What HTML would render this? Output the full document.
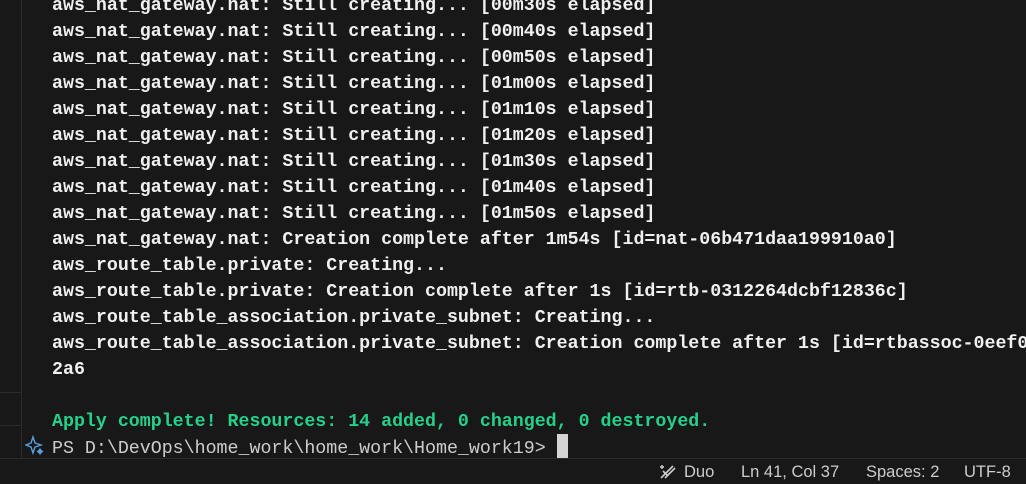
<!DOCTYPE html>
<html><head><style>
body{margin:0;width:1026px;height:483px;background:#181818;overflow:hidden;position:relative;font-family:"Liberation Mono",monospace;}
.gut{position:absolute;left:21px;top:0;width:1px;height:458px;background:#2b2b2b}
.hl{position:absolute;left:0;width:21px;height:1px;background:#2b2b2b}
.t{position:absolute;left:52px;top:-7px;font-size:18.3px;line-height:26px;color:#f0f0f0;font-weight:bold;white-space:pre}
.g{color:#23d18b}
.p{position:absolute;left:52px;top:434px;font-size:18.3px;line-height:26px;color:#cccccc;white-space:pre}
.cur{display:inline-block;width:11px;height:24px;background:#d4d4d4;vertical-align:-5px}
.sb{position:absolute;left:0;top:458px;width:1026px;height:25px;background:#181818;border-top:1px solid #2b2b2b;font-family:"Liberation Sans",sans-serif;font-size:16.5px;color:#cccccc}
.sb span{position:absolute;top:4px}
</style></head><body>
<div class="gut"></div>
<div class="hl" style="top:392px"></div>
<div class="hl" style="top:425px"></div>
<div class="t">aws_nat_gateway.nat: Still creating... [00m30s elapsed]
aws_nat_gateway.nat: Still creating... [00m40s elapsed]
aws_nat_gateway.nat: Still creating... [00m50s elapsed]
aws_nat_gateway.nat: Still creating... [01m00s elapsed]
aws_nat_gateway.nat: Still creating... [01m10s elapsed]
aws_nat_gateway.nat: Still creating... [01m20s elapsed]
aws_nat_gateway.nat: Still creating... [01m30s elapsed]
aws_nat_gateway.nat: Still creating... [01m40s elapsed]
aws_nat_gateway.nat: Still creating... [01m50s elapsed]
aws_nat_gateway.nat: Creation complete after 1m54s [id=nat-06b471daa199910a0]
aws_route_table.private: Creating...
aws_route_table.private: Creation complete after 1s [id=rtb-0312264dcbf12836c]
aws_route_table_association.private_subnet: Creating...
aws_route_table_association.private_subnet: Creation complete after 1s [id=rtbassoc-0eef0
2a6

<span class="g">Apply complete! Resources: 14 added, 0 changed, 0 destroyed.</span></div>
<svg style="position:absolute;left:25px;top:435px" width="20" height="20" viewBox="0 0 20 20"><path d="M8 2 L10 8 L16 10 L10 12 L8 18 L6 12 L1 10 L6 8 Z" fill="none" stroke="#5aa0e0" stroke-width="1.4"/><path d="M15 13 l1.5 2 l2 1.5 l-2 1.5 l-1.5 2 l-1.5-2 l-2-1.5 l2-1.5z" fill="#5aa0e0"/></svg>
<div class="p">PS D:\DevOps\home_work\home_work\Home_work19&gt; <span class="cur"></span></div>
<div class="sb">
<svg style="position:absolute;left:657px;top:5px" width="22" height="16" viewBox="0 0 22 16"><path d="M3 3h4M5 1v4" stroke="#ccc" stroke-width="1.4"/><path d="M4 14 L16 2 M8 14 L18 4 M6 7 l4 4" stroke="#ccc" stroke-width="1.6" fill="none"/></svg>
<span style="left:684px">Duo</span>
<span style="left:741px">Ln 41, Col 37</span>
<span style="left:866px">Spaces: 2</span>
<span style="left:964px">UTF-8</span>
</div>
</body></html>
